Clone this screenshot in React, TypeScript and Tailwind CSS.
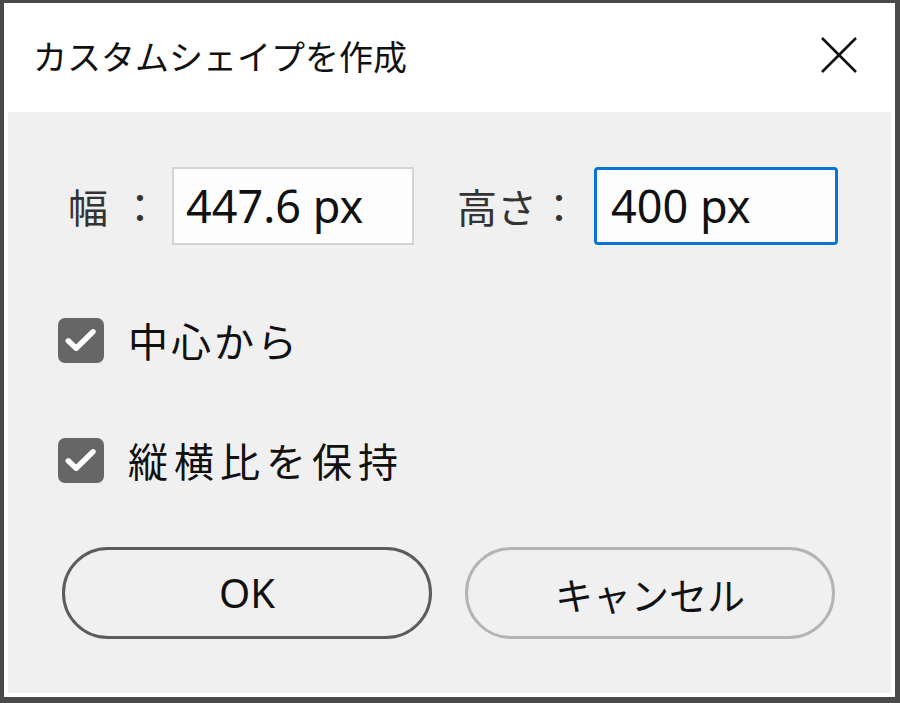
const jp = { fontFamily: '"Noto Sans CJK JP", "Noto Sans", sans-serif' };

function CheckRow({ label, className, track }: { label: string; className?: string; track: string }) {
    return (
        <div className={`flex items-center h-[46px] pl-[50px] ${className ?? ""}`}>
            <div className="w-[46px] h-[45px] rounded-[7px] bg-[#666666] flex items-center justify-center">
                <svg width="36" height="36" viewBox="0 0 24 24" fill="none" stroke="#ffffff" strokeWidth="3.6" strokeLinecap="round" strokeLinejoin="round">
                    <path d="M3.5 12.5l5.3 5 11.2-11" />
                </svg>
            </div>
            <span className={`ml-[24px] text-[40px] leading-none text-[#111] ${track}`}>{label}</span>
        </div>
    );
}

export default function App() {
    return (
        <div
            className="w-[900px] h-[703px] bg-[#4a4a4a] pt-[3px] pl-[4px] pr-[5px] pb-[6px]"
            style={jp}
        >
            <div className="w-full h-full bg-white flex flex-col">
                {/* Title bar */}
                <div className="h-[109px] flex items-center justify-between pl-[29px] pr-[36px] shrink-0">
                    <span className="text-[34px] leading-none text-[#111] -mt-[4px]">カスタムシェイプを作成</span>
                    <svg width="40" height="40" viewBox="0 0 40 40" className="-mt-[6px]">
                        <path d="M3 3L37 37M37 3L3 37" stroke="#111" strokeWidth="2.6" />
                    </svg>
                </div>

                {/* Body */}
                <div className="flex-1 bg-[#f0f0f0] mx-[4px] mb-[4px] flex flex-col">
                    <div className="flex items-center mt-[55px] h-[78px] pl-[60px]">
                        <div className="w-[104px] flex items-center text-[40px] leading-none text-[#333]">
                            <span>幅</span>
                            <span className="ml-[12px]">：</span>
                        </div>
                        <div
                            className="w-[242px] h-[78px] bg-[#fdfdfd] border-2 border-[#d4d4d4] flex items-center pl-[12px] text-[45px] text-[#111]"
                            style={{ fontFamily: '"Noto Sans", "Open Sans", sans-serif' }}
                        >
                            447.6 px
                        </div>
                        <div className="w-[180px] pl-[43px] flex items-center text-[40px] leading-none text-[#333]">
                            <span>高さ</span>
                            <span className="ml-[2px]">：</span>
                        </div>
                        <div
                            className="w-[244px] h-[78px] bg-[#fdfdfd] border-[3px] border-[#0a74d6] rounded-[4px] flex items-center pl-[14px] text-[45px] text-[#111]"
                            style={{ fontFamily: '"Noto Sans", "Open Sans", sans-serif' }}
                        >
                            400 px
                        </div>
                    </div>

                    <CheckRow label="中心から" className="mt-[72px]" track="tracking-[3px]" />
                    <CheckRow label="縦横比を保持" className="mt-[74px]" track="tracking-[6px]" />

                    <div className="flex gap-[33px] mt-[64px] pl-[54px]">
                        <button
                            className="w-[370px] h-[92px] rounded-full border-[3px] border-[#5c5c5c] bg-[#f0f0f0] text-[40px] text-[#111] flex items-center justify-center"
                            style={{ fontFamily: '"Noto Sans", "Open Sans", sans-serif' }}
                        >
                            OK
                        </button>
                        <button className="w-[370px] h-[92px] rounded-full border-[3px] border-[#b4b4b4] bg-[#f0f0f0] text-[38px] text-[#111] flex items-center justify-center">
                            キャンセル
                        </button>
                    </div>
                </div>
            </div>
        </div>
    );
}
